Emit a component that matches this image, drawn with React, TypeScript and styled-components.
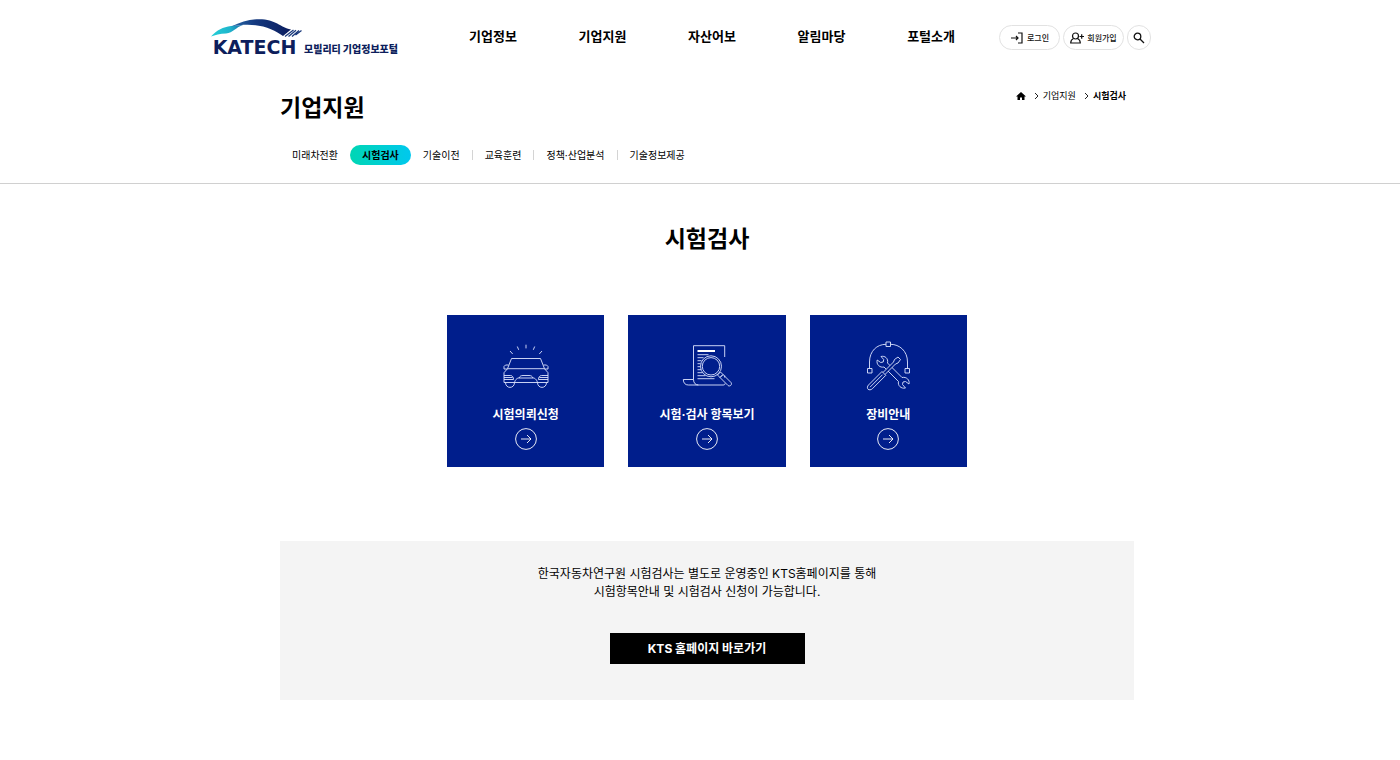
import React from 'react';
import styled, { createGlobalStyle, css } from 'styled-components';

const Global = createGlobalStyle`
  *, *::before, *::after { box-sizing: border-box; }
  body { margin: 0; background: #fff; color: #000; font-family: Inter, "Noto Sans CJK KR", sans-serif; font-size: 13px; }
  h1, h2, p, ul, ol { margin: 0; padding: 0; }
  ul, ol { list-style: none; }
  a { color: inherit; text-decoration: none; }
`;

const Page = styled.div`padding-left: 14px;`;

const Header = styled.header`
  display: flex;
  align-items: flex-start;
  max-width: 992px;
  height: 82px;
  margin: 0 auto;
  padding: 18px 52px 0 0;
`;

const Logo = styled.a`
  display: flex;
  align-items: flex-end;
  gap: 6px;
  color: #0d1e5c;
`;
const Mark = styled.span`
  display: flex;
  flex-direction: column;
  width: 87px;
  svg { display: block; overflow: visible; }
`;
const Wordmark = styled.span`
  font: 700 19px/19px "DejaVu Sans", sans-serif;
  text-align: center;
`;
const LogoName = styled.span`
  font-size: 10px;
  font-weight: 900;
  line-height: 16px;
  white-space: nowrap;
`;

const Nav = styled.nav`
  flex: 1;
  margin-top: 8px;
  padding: 0 44px 0 71px;
  ul { display: flex; justify-content: space-between; }
  a { font-size: 13px; font-weight: 700; line-height: 20px; white-space: nowrap; }
`;

const Tools = styled.div`
  display: flex;
  gap: 3px;
  margin-top: 7px;
`;
const Tool = styled.button<{ $round?: boolean }>`
  display: flex;
  align-items: center;
  justify-content: center;
  gap: 3px;
  width: ${p => (p.$round ? 24 : 61)}px;
  height: 25px;
  padding: 0;
  border: 1px solid #e2e2e2;
  border-radius: 13px;
  background: #fff;
  color: #111;
  font-family: inherit;
  font-size: 8px;
  font-weight: 500;
  white-space: nowrap;
`;

const Container = styled.div`
  max-width: 854px;
  margin: 0 auto;
`;

const SubHeader = styled.div`
  margin-left: -14px;
  padding-left: 14px;
  border-bottom: 1px solid #d0d0d0;
`;
const TitleRow = styled.div`
  display: flex;
  justify-content: space-between;
  align-items: flex-start;
`;
const Title = styled.h1`
  margin-top: 9px;
  font-size: 23px;
  font-weight: 700;
  line-height: 34px;
`;
const Crumbs = styled.ol`
  display: flex;
  align-items: center;
  gap: 8px;
  margin-top: 6px;
  padding-right: 8px;
  font-size: 9px;
  line-height: 16px;
  li { display: flex; align-items: center; gap: 4px; }
  svg { display: block; }
`;

const Tabs = styled.ul`
  display: flex;
  margin-top: 20px;
  padding-bottom: 18px;
`;
const Tab = styled.li<{ $divider?: boolean }>`
  display: flex;
  align-items: center;
  ${p => p.$divider && css`&::after { content: ''; width: 1px; height: 10px; background: #d4d4d4; }`}
`;
const TabLink = styled.a<{ $active?: boolean }>`
  padding: 0 12px;
  border-radius: 10px;
  font-size: 10px;
  line-height: 20px;
  white-space: nowrap;
  ${p => p.$active && css`
    background: linear-gradient(90deg, #00d6b4, #00c8ee);
    font-weight: 700;
  `}
`;

const Heading = styled.h2`
  margin-top: 38px;
  font-size: 23px;
  font-weight: 700;
  line-height: 34px;
  text-align: center;
`;

const Cards = styled.ul`
  display: grid;
  grid-template-columns: repeat(3, 1fr);
  gap: 24px;
  max-width: 520px;
  margin: 59px auto 0;
`;
const Card = styled.a`
  display: flex;
  flex-direction: column;
  align-items: center;
  height: 152px;
  padding-top: 24px;
  background: #001e8c;
  color: #fff;
  svg { display: block; }
`;
const CardLabel = styled.span`
  margin: 12px 0 3px;
  font-size: 12px;
  font-weight: 700;
  line-height: 20px;
  white-space: nowrap;
`;

const Notice = styled.section`
  display: flex;
  flex-direction: column;
  align-items: center;
  margin-top: 74px;
  padding: 24px 20px 36px;
  background: #f4f4f4;
`;
const NoticeText = styled.p`
  font-size: 12px;
  line-height: 18px;
  text-align: center;
`;
const NoticeLink = styled.a`
  width: 195px;
  margin-top: 32px;
  background: #000;
  color: #fff;
  font-size: 12px;
  font-weight: 700;
  line-height: 31px;
  text-align: center;
`;

const Car = () => (
  <svg width="56" height="54" viewBox="0 0 56 54" fill="none" stroke="#dfe5ff" strokeWidth="0.9" aria-hidden="true">
    <path d="M12 12l2.700 3M19.300 7.500l1.400 3.300M28 5.700v3.700M36.700 7.500l-1.400 3.300M44 12l-2.700 3" />
    <path d="M13.500 19.500h29L46.500 29.700l3.500 4V43.500H6V33.700l3.500-4zM9.500 29.700h37" />
    <path d="M10.500 26H7.500L6 27.500V30h3.500M45.500 26h3l1.500 1.500V30h-3.500" />
    <path d="M6 36.500h6.500c2 0 3 2 3 4H6M6 38.500h8.500M50 36.500h-6.500c-2 0-3 2-3 4H50M50 38.500h-8.500" />
    <path d="M16.500 43.500c1-3.500 3-4.500 4.500-4.500 1-2 2-2.500 4-2.500h6c2 0 3 .5 4 2.500 1.500 0 3.500 1 4.500 4.500M21 39h14" />
    <path d="M7.500 43.500c0 6.500 9 6.500 9 0M39.500 43.500c0 6.500 9 6.500 9 0" />
  </svg>
);

const Doc = () => (
  <svg width="56" height="54" viewBox="0 0 56 54" fill="none" stroke="#dfe5ff" strokeWidth="0.9" aria-hidden="true">
    <path d="M14.500 40.500V6.700h31.200V18M45.700 36.500v2M4.300 40.500h10.200c0 3.500 2 5.500 5 5.500H44c1.500 0 2-.5 2-1.500M4.300 40.500c0 3.500 2 5.500 5 5.500h10.200" />
    <path d="M18.500 12h17.500" stroke="#fff" strokeWidth="2" />
    <path d="M18.500 15.700h11M18.500 18.700h6M18.500 21.700h4M18.500 24.700h3M18.500 27.700h3M18.500 30.700h3.500M18.500 33.700h5M18.500 36.700h8M18.500 39.700h17" />
    <circle cx="32" cy="27.300" r="10.500" /><circle cx="32" cy="27.300" r="8.700" />
    <path d="M38.500 36l3-3 2.500 2.500-3 3zM41 38.500l3-3 8 8c1.500 2-1 4.500-3 3z" />
  </svg>
);

const Wrench = () => (
  <svg width="56" height="54" viewBox="0 0 56 54" fill="none" stroke="#dfe5ff" strokeWidth="0.9" aria-hidden="true">
    <path d="M9.500 29.500V23C9.500 12 17 5.300 26 5.300M30.500 5.300C39.500 5.300 47.500 12 47.500 23v6.500" />
    <path d="M26 3h4.500v4.500H26zM7.500 29.500H12V34H7.500zM45 29.500h4.500V34H45z" />
    <path d="M17.200 21l3.500 2.500 2.500-.5.500-2.500L21 17.500c4-1 7.500 2 6.500 6.500L42 38.500c4.500-1 8 2.500 7 6.500l-3.500-2.500-2.500.5-.5 2.500 3 3.500c-4.500 1-8-2.500-7-6.500L24 28c-4 1-8-2.500-6.800-7z" />
    <path d="M8 50.200c-1-1-.7-3 .5-4.200L22 32.500l3.800 3.800-13.500 13.500c-1.300 1.200-3.300 1.400-4.300.4zM23 33.500l10.500-10.500 1-2.500 3.500-2.500 2.500 2.500L38 24l-2.500 1L25 35.500M10 48.200l12.500-12.500" fill="#001e8c" />
  </svg>
);

const Arrow = () => (
  <svg width="22" height="22" viewBox="0 0 22 22" fill="none" stroke="#fff" strokeWidth="0.9" aria-hidden="true">
    <circle cx="11" cy="11" r="10.400" />
    <path d="M6 11h10M12 7l4 4-4 4" />
  </svg>
);

const Chevron = () => (
  <svg width="5" height="8" viewBox="0 0 5 8" fill="none" stroke="#222" aria-hidden="true"><path d="M1 1l3 3-3 3" /></svg>
);

const menu = ['기업정보', '기업지원', '자산어보', '알림마당', '포털소개'];
const tabs = [
  { label: '미래차전환' },
  { label: '시험검사', active: true },
  { label: '기술이전', divider: true },
  { label: '교육훈련', divider: true },
  { label: '정책·산업분석', divider: true },
  { label: '기술정보제공' },
];
const cards = [
  { label: '시험의뢰신청', Icon: Car },
  { label: '시험·검사 항목보기', Icon: Doc },
  { label: '장비안내', Icon: Wrench },
];

export default function App() {
  return (
    <Page>
      <Global />
      <Header>
        <Logo href="#">
          <Mark>
            <svg width="91" height="20" viewBox="0 0 91 20" aria-hidden="true">
              <defs>
                <linearGradient id="teal"><stop offset="0" stopColor="#22cfd6" /><stop offset="0.6" stopColor="#1fb4cc" /><stop offset="1" stopColor="#1b6aa8" /></linearGradient>
                <linearGradient id="navy"><stop offset="0" stopColor="#2a6cab" /><stop offset="0.4" stopColor="#14397f" /><stop offset="1" stopColor="#0b1c5e" /></linearGradient>
              </defs>
              <path d="M0 18.500C6 12 12 9 20 8l12-1c-7 2-10 8-17 8.500C9 15.500 4 17 0 18.500z" fill="url(#teal)" />
              <path d="M20 8.500C30 4 38 1.200 48 1.200c17 0 21 8 32 10.300L72 18C62 11 46 3 20 8.500z" fill="url(#navy)" />
              <path d="M74 18.500l8.500-6.500M77.500 18.500l7.500-6.200M81 18.500l7-6M84.500 17l6-4.500" stroke="#1b3a7c" strokeWidth="1.300" />
            </svg>
            <Wordmark>KATECH</Wordmark>
          </Mark>
          <LogoName>모빌리티 기업정보포털</LogoName>
        </Logo>
        <Nav>
          <ul>{menu.map(m => <li key={m}><a href="#">{m}</a></li>)}</ul>
        </Nav>
        <Tools>
          <Tool type="button">
            <svg width="14" height="14" viewBox="0 0 14 14" fill="none" stroke="#111" strokeWidth="1.200" aria-hidden="true"><path d="M8 2h4v10H8M1 7h7M6 5l2 2-2 2" /></svg>
            로그인
          </Tool>
          <Tool type="button">
            <svg width="14" height="14" viewBox="0 0 14 14" fill="none" stroke="#111" strokeWidth="1.200" aria-hidden="true"><circle cx="5.500" cy="5" r="3" /><path d="M3.500 7.500C1.500 8.500.7 10 .7 12h9.600c0-2-.8-3.500-2.800-4.500M9.500 5.500H14M11.700 3.200v4.600" /></svg>
            회원가입
          </Tool>
          <Tool type="button" $round aria-label="검색">
            <svg width="12" height="12" viewBox="0 0 12 12" fill="none" stroke="#111" strokeWidth="1.300" aria-hidden="true"><circle cx="4.500" cy="4.500" r="3.300" /><path d="M7 7l4 4" /></svg>
          </Tool>
        </Tools>
      </Header>

      <SubHeader>
        <Container>
          <TitleRow>
            <Title>기업지원</Title>
            <Crumbs>
              <li><a href="#" aria-label="홈"><svg width="10" height="10" viewBox="0 0 10 10" aria-hidden="true"><path d="M5 1l5 4.500H8.500V9H6V6.500H4V9H1.500V5.500H0z" /></svg></a></li>
              <li><Chevron /><a href="#">기업지원</a></li>
              <li><Chevron /><strong>시험검사</strong></li>
            </Crumbs>
          </TitleRow>
          <Tabs>
            {tabs.map(t => (
              <Tab key={t.label} $divider={t.divider}><TabLink href="#" $active={t.active}>{t.label}</TabLink></Tab>
            ))}
          </Tabs>
        </Container>
      </SubHeader>

      <Container as="main">
        <Heading>시험검사</Heading>
        <Cards>
          {cards.map(({ label, Icon }) => (
            <li key={label}><Card href="#"><Icon /><CardLabel>{label}</CardLabel><Arrow /></Card></li>
          ))}
        </Cards>
        <Notice>
          <NoticeText>
            한국자동차연구원 시험검사는 별도로 운영중인 KTS홈페이지를 통해<br />
            시험항목안내 및 시험검사 신청이 가능합니다.
          </NoticeText>
          <NoticeLink href="#">KTS 홈페이지 바로가기</NoticeLink>
        </Notice>
      </Container>
    </Page>
  );
}
